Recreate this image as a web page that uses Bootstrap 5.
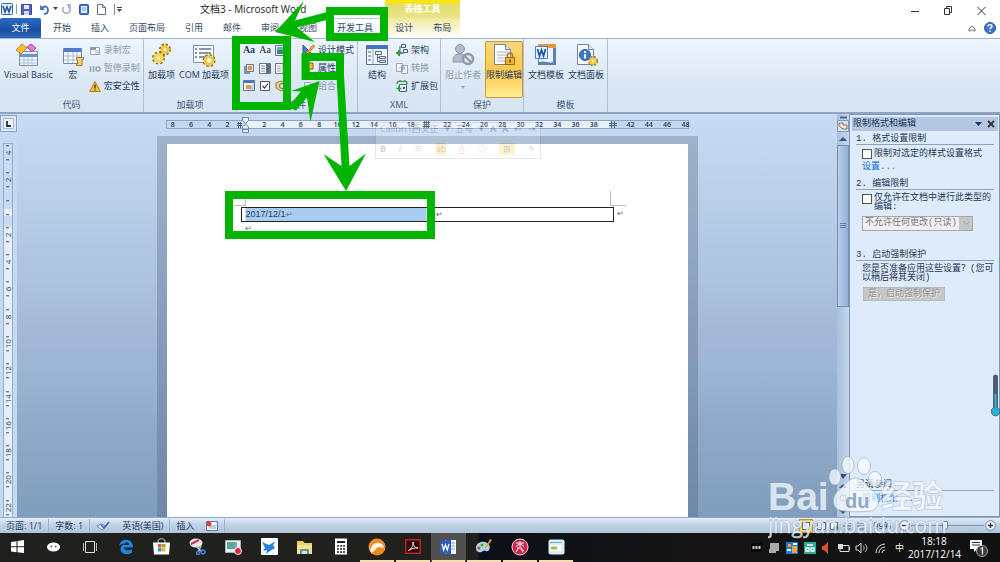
<!DOCTYPE html>
<html lang="zh-CN">
<head>
<meta charset="utf-8">
<meta name="viewport" content="width=device-width, initial-scale=1">
<title>文档3 - Microsoft Word</title>
<link rel="stylesheet" href="https://cdn.jsdelivr.net/npm/bootstrap@5.3.0/dist/css/bootstrap.min.css">
<style>
body{font-family:"Open Sans","Noto Sans CJK SC",sans-serif;font-size:9px;line-height:12px;color:#1f3a5f;min-height:100vh;background:#fff;overflow-x:hidden}
button,input,select{font:inherit;color:inherit}
.plain{border:0;background:none;padding:0;display:flex;align-items:center}
a{text-decoration:none}
svg{display:block;flex:none}
/* title bar and tabs */
.titlebar{height:18px}
.qat{width:200px;padding-left:1px}
.doc-title{width:185px;font-size:10px;color:#222}
.ctx-head{width:75px;height:18px;background:linear-gradient(#ffe600 0 2px,#e2dc6a 4px,#e9e588);color:#fff;font-weight:700}
.tabs{height:20px}
.tabs .tab{padding:0 10px;height:20px;line-height:20px;color:#33475f;white-space:nowrap}
.tabs .tab-file{width:41px;padding:0;margin-right:2px;text-align:center;color:#fff;background:linear-gradient(#2a6cc4,#1a4fa0 60%,#2c69c0);border-radius:2px 2px 0 0}
.tabs .tab-on{border:1px solid #b5c6da;border-bottom:0;border-radius:2px 2px 0 0;background:linear-gradient(#fff,#e9f2fc);padding:0 9px;margin-right:2px;line-height:18px}
.ctx-tabs{background:linear-gradient(#eeeaa0,#fff);width:75px}
/* ribbon */
.ribbon{height:76px;background:linear-gradient(#edf5fd,#dce8f5 55%,#d7e4f1);border-top:1px solid #9fb4d0;border-bottom:2px solid #8fa4bf}
.rgroup{display:flex;flex-direction:column;border-right:1px solid #afc0d6;flex:none}
.rgroup>.rbody{height:59px;display:flex;padding-top:2px}
.rgroup>.rname{line-height:14px;text-align:center;color:#41597a}
.big{flex-direction:column;height:57px;padding-top:2px;white-space:nowrap}
.big span{margin-top:2px;line-height:12px}
.big svg{height:24px}
.smalls{display:flex;flex-direction:column}
.smalls .plain{height:18px;gap:3px;white-space:nowrap}
.off{color:#8d9bae}
.pressed{border:1px solid #c99a36;border-radius:2px;background:linear-gradient(#fbd77a,#fdc94f 50%,#ffd768 75%,#fff19a);padding-top:1px}
.g-code{width:144px}.g-addin{width:93px}.g-ctl{width:121px}.g-xml{width:83px}.g-prot{width:83px}.g-tpl{width:84px}
.ctl-grid{display:grid;grid-template-columns:repeat(3,16px);grid-auto-rows:18px;place-items:center}
.ctl-grid .aa{font:bold 10px/12px "Liberation Serif","Noto Sans CJK SC",serif}
/* work area */
.work{background:linear-gradient(#c8dbf2,#b0c6e0 36%,#a2b6d5 58%,#9bb7d3 62%,#93abcb 75%,#7f9dbc)}
.vcol{width:17px;background:#c5d9f0}
.tabsel{width:17px;height:17px;border:1px solid #8aa3c4;background:#dce8f6;margin:1px 0 11px;display:grid;place-items:center}
.vruler{width:10px;margin-left:3px;border:1px solid #93add0;border-bottom:0;overflow:hidden;background:linear-gradient(#c9dbf1 0 65px,#e6effa 65px 72px,#c9dbf1 72px 83px,#e6effa 83px)}
.vruler>div{margin:-5px 0 -4px}
.vruler span{flex:1 1 0;min-height:0;display:grid;place-items:center;font-size:8px;line-height:8px;writing-mode:vertical-rl;transform:rotate(180deg);background:linear-gradient(#456 0 0) center 6px/3px 1px no-repeat,linear-gradient(#456 0 0) center 20px/3px 1px no-repeat}
.hruler{width:523px;height:9px;margin-top:6px;border:1px solid #8ba6c9;font-size:7px;font-weight:600;line-height:8px;background:linear-gradient(90deg,#c4d7ee 0 80px,#e8f1fb 80px 443px,#c4d7ee 443px)}
.hruler .nums{margin:0 -7px 0 -3px}
.hruler span{flex:1 1 0;text-align:center}
.hmarks{left:69px;top:-4px}
.sheet-wrap{width:541px;margin-top:7px;padding:8px 10px 0;background:rgba(70,90,120,.3)}
.sheet{background:#fff;padding:63px 73px 0 74px}
.doc-tbl{width:373px;table-layout:fixed;border-collapse:collapse;font:9px/13px "Liberation Sans","Noto Sans CJK SC",sans-serif;color:#1c3f66}
.doc-tbl td{border:1px solid #222;height:14px;padding:0 0 0 4px}
.doc-tbl td.sel{width:186px;background:linear-gradient(90deg,#fff 4px,#a9ccf1 4px)}
.crn{border:0 solid #bbb;width:12px;height:15px;top:-16px}
.crn-l{left:-7px;border-width:0 1px 1px 0}
.crn-r{right:-11px;border-width:0 0 1px 1px;width:16px}
.ret{font-size:8px;color:#667}
.mini{left:358px;top:8px;width:166px;height:37px;border:1px solid #888;background:#fff;opacity:.2;font-size:9px;color:#222;white-space:nowrap;overflow:hidden}
.sbar{width:12px;background:linear-gradient(90deg,#a9c0dd,#c4d6ec)}
.sbar .thumb{width:12px;height:162px;border:1px solid #6f8fb6;background:linear-gradient(90deg,#b9cfe8,#93b2d6);display:grid;place-items:center;color:#587ba5}
/* task pane */
.pane{width:151px;background:#deebfb;border:1px solid #7d97ba;font-family:"Liberation Mono","Noto Sans CJK SC",sans-serif;color:#1f3655;padding:2px 1px 0 2px;line-height:9px}
.pane-head{background:#b3c7e2;height:14px;line-height:14px;padding:0 3px 0 1px}
.pane h2{font-size:9px;line-height:9px;margin:0 4px;border-bottom:1px solid #8fa3bf;white-space:pre;font-weight:400}
.pane .blk{padding:0 0 0 10px}
.pane a{color:#0a6fd8}
.pane input[type=checkbox]{appearance:none;width:10px;height:10px;border:1px solid #555;background:#fff;margin:0 2px 0 0;flex:none}
.pickbox{width:111px}
.pickbox svg{right:3px;top:5px}
.pane select{appearance:none;display:block;width:100%;height:15px;border:1px solid #a7a7a7;border-radius:0;padding:0 2px;color:#777;background:linear-gradient(#c6c6c6 0 0) right/13px 100% no-repeat #f0f0f0;line-height:13px;opacity:1}
.pane .start{width:82px;height:14px;border:1px solid #b9b9b9;background:#c6c6c6;color:#8e8e8e;text-shadow:1px 1px #eee;padding:0;margin-left:1px;line-height:12px}
/* status bar */
.status{height:16px;background:linear-gradient(#e3edf8,#c3d4e7 40%,#b0c3d9);border-top:1px solid #93aac6;color:#2a4160;line-height:14px}
.status .seg{border-right:1px solid #9bb0ca;padding:0 6px;height:13px}
.zoomer{appearance:none;width:73px;height:11px;background:linear-gradient(#7f93ab 0 0) center/100% 1px no-repeat;margin:0 1px}
.zoomer::-webkit-slider-thumb{appearance:none;width:6px;height:9px;border:1px solid #687f9c;background:#f5f8fc;border-radius:1px 1px 3px 3px}
/* windows taskbar */
.taskbar{height:29px;background:linear-gradient(90deg,#20201f 0 477px,#0b1017 480px,#171515 700px,#111)}
.apps{width:574px}
.apps .plain{flex:1 1 0;justify-content:center;border-bottom:2px solid transparent}
.apps .run{border-image:linear-gradient(90deg,transparent 3px,#f7dcae 3px calc(100% - 3px),transparent 0) 2}
.apps .front{background:#505050}
.tray{color:#eee;gap:4px}
.clock{width:52px;text-align:center;font-size:10px;line-height:13px;color:#fff;white-space:nowrap}
.over{pointer-events:none}
.floatbar{right:0;top:374px}
.wm{right:52px;bottom:18px}
</style>
</head>
<body class="d-flex flex-column position-relative">

<header>
  <div class="titlebar d-flex align-items-center">
    <div class="qat d-flex align-items-center">
      <svg width="12" height="12" viewBox="0 0 12 12"><rect x=".5" y=".5" width="11" height="11" rx="1" fill="#eaf3fd" stroke="#2b62ad"/><path d="M2 3l2 6 2-5 2 5 2-6" fill="none" stroke="#1d57a8" stroke-width="1.6"/></svg>
      <svg width="8" height="12"><path d="M3.500 1v10" stroke="#999"/></svg>
      <button class="plain" aria-label="保存"><svg width="11" height="11" viewBox="0 0 11 11"><path d="M.5.500h10v10h-10z" fill="#5163bd" stroke="#38489a"/><path d="M3 1h5v4H3z" fill="#e7ecfb"/><path d="M3 7h5v4H3z" fill="#cfd8f4"/></svg></button>
      <button class="plain ms-2" aria-label="撤消"><svg width="9" height="11" viewBox="0 0 9 11"><path d="M2 4c3-3 6-1 6 2S6 10 4 10" fill="none" stroke="#3e6fc2" stroke-width="1.800"/><path d="M0 1v5h5z" fill="#3e6fc2"/></svg></button>
      <svg class="ms-1" width="5" height="4"><path d="M0 0h5L2.500 3z" fill="#444"/></svg>
      <button class="plain ms-1" aria-label="恢复"><svg width="9" height="11" viewBox="0 0 9 11"><path d="M6 2.500A3.600 3.600 0 1 1 2 3" fill="none" stroke="#a9b7ca" stroke-width="1.800"/><path d="M4 0h5v5z" fill="#a9b7ca"/></svg></button>
      <button class="plain ms-2" aria-label="打印预览"><svg width="10" height="11" viewBox="0 0 10 11"><rect x=".5" y=".5" width="9" height="10" rx="1" fill="#3d74d0" stroke="#2759ac"/><path d="M2 2h6v7H2z" fill="#dfeafc"/><path d="M3 4h4M3 6h4" stroke="#7fa3dc"/></svg></button>
      <button class="plain ms-2" aria-label="新建"><svg width="9" height="11" viewBox="0 0 9 11"><path d="M.5.500h5l3 3v7h-8z" fill="#fff" stroke="#5f7290"/><path d="M5.500.500v3h3" fill="none" stroke="#5f7290"/></svg></button>
      <svg class="ms-2" width="9" height="11"><path d="M.5 0v11" stroke="#888"/><path d="M3 3.500h5" stroke="#444"/><path d="M3 5h5L5.500 8z" fill="#444"/></svg>
    </div>
    <div class="doc-title">文档3 - Microsoft Word</div>
    <div class="ctx-head d-flex align-items-center justify-content-center">表格工具</div>
    <div class="d-flex ms-auto align-items-center pt-1">
      <button class="plain" aria-label="最小化"><svg width="33" height="10"><path d="M11 5.500h8" stroke="#333"/></svg></button>
      <button class="plain" aria-label="还原"><svg width="33" height="10"><path d="M11.500 2.500h5v6h-5zM13.500 2.500v-2h5v6h-2" fill="none" stroke="#333"/></svg></button>
      <button class="plain" aria-label="关闭"><svg width="34" height="10"><path d="M11.500 1l8 8m0-8l-8 8" stroke="#333"/></svg></button>
    </div>
  </div>
  <div class="d-flex tabs">
    <nav class="d-flex">
      <a class="tab tab-file" href="#">文件</a><a class="tab" href="#">开始</a><a class="tab" href="#">插入</a><a class="tab" href="#">页面布局</a><a class="tab" href="#">引用</a><a class="tab" href="#">邮件</a><a class="tab" href="#">审阅</a><a class="tab" href="#">视图</a><a class="tab tab-on" href="#">开发工具</a>
      <div class="ctx-tabs d-flex"><a class="tab" href="#">设计</a><a class="tab" href="#">布局</a></div>
    </nav>
    <div class="d-flex ms-auto align-items-center pe-1">
      <button class="plain me-1" aria-label="功能区最小化"><svg width="8" height="7"><path d="M1 4l3-3 3 3v2H5.500L4 4.500 2.500 6H1z" fill="none" stroke="#667"/></svg></button>
      <button class="plain ms-1" aria-label="帮助"><svg width="12" height="12" viewBox="0 0 12 12"><circle cx="6" cy="6" r="5.500" fill="#3f74cc" stroke="#2b58a4"/><path d="M4 4.500C4 2 8 2 8 4.300 8 5.700 6 5.600 6 7.300" fill="none" stroke="#fff" stroke-width="1.400"/><circle cx="6" cy="9.200" r=".8" fill="#fff"/></svg></button>
    </div>
  </div>
</header>

<section class="ribbon d-flex" aria-label="开发工具">
  <div class="rgroup g-code">
    <div class="rbody">
      <button class="plain big ms-1"><svg width="26" viewBox="0 0 26 24"><path d="M4.500 8.500h18v14h-18z" fill="#f3f8fe" stroke="#7d93b3"/><path d="M5 11h17v3H5z" fill="#6d93cf"/><path d="M9 14v8m4-8v8m4-8v8M5 17h17M5 20h17" stroke="#a9bedc"/><path d="M1 7l6-6 5 4-6 6z" fill="#f8bf3c" stroke="#bf8516"/><path d="M12 4l4-3 5 4-4 4z" fill="#e577d8" stroke="#af43a3"/></svg><span>Visual Basic</span></button>
      <button class="plain big ms-2"><svg width="24" viewBox="0 0 24 24"><path d="M2.500 5.500h18v15h-18z" fill="#f3f8fe" stroke="#7288aa"/><path d="M3 5h17v4H3z" fill="#4f7cc4"/><path d="M7 9v11m5-11v11m4-11v11M3 13h17M3 17h17" stroke="#a9bedc"/><path d="M15.500 14.500h7v2h-1.500v6h-5.500v-2H17z" fill="#f5cf75" stroke="#a8761c"/></svg><span>宏</span></button>
      <div class="smalls ms-1">
        <button class="plain off"><svg width="12" height="11" viewBox="0 0 12 11"><path d="M1.500 2.500h9v7h-9z" fill="#f4f6f8" stroke="#9aa5b3"/><path d="M2 2h5v3H2z" fill="#8d98a7"/><path d="M6 6h4M6 8h4" stroke="#a9b3c0"/></svg>录制宏</button>
        <button class="plain off"><svg width="12" height="11" viewBox="0 0 12 11"><path d="M1.500 3v6M4.500 3v6" stroke="#9aa5b3" stroke-width="1.500"/><circle cx="9" cy="6" r="2" fill="none" stroke="#9aa5b3" stroke-width="1.600"/></svg>暂停录制</button>
        <button class="plain"><svg width="12" height="11" viewBox="0 0 12 11"><path d="M6 .6l5.400 9.900H.6z" fill="#fbc62c" stroke="#b07f10"/><path d="M6 3.500v4M6 8.500v1" stroke="#222" stroke-width="1.200"/></svg>宏安全性</button>
      </div>
    </div>
    <div class="rname">代码</div>
  </div>

  <div class="rgroup g-addin">
    <div class="rbody ps-1">
      <button class="plain big"><svg width="20" viewBox="0 0 20 24"><g fill="none" stroke="#8e6b10" stroke-width="4"><circle cx="13" cy="6.500" r="4" stroke-dasharray="1.800 1.350"/><circle cx="6.500" cy="15" r="4.500" stroke-dasharray="2 1.530"/></g><circle cx="13" cy="6.500" r="3" fill="none" stroke="#f2c63d" stroke-width="3"/><circle cx="6.500" cy="15" r="3.500" fill="none" stroke="#f7d257" stroke-width="3.300"/></svg><span>加载项</span></button>
      <button class="plain big ms-1"><svg width="24" viewBox="0 0 24 24"><path d="M1.500 2.500h20v17h-20z" fill="#f7fafe" stroke="#7e8fa8"/><path d="M3 6h2m2 0h12M3 10h2m2 0h12M3 14h2m2 0h8" stroke="#62758f" stroke-width="1.300"/><circle cx="17" cy="17.500" r="5" fill="none" stroke="#8e6b10" stroke-width="3" stroke-dasharray="2.200 1.700"/><circle cx="17" cy="17.500" r="3.800" fill="#fff" stroke="#f2c63d" stroke-width="3"/></svg><span>COM 加载项</span></button>
    </div>
    <div class="rname">加载项</div>
  </div>

  <div class="rgroup g-ctl">
    <div class="rbody">
      <div class="ctl-grid ms-1">
        <button class="plain aa">Aa</button><button class="plain aa text-dark fw-normal">Aa</button>
        <button class="plain" aria-label="图片"><svg width="12" height="11"><path d="M.5.500h11v10H.5z" fill="#eef" stroke="#678"/><path d="M2 2h8v3H2z" fill="#5bb0cf"/><path d="M2 5h8v4H2z" fill="#3c8f5a"/></svg></button>
        <button class="plain" aria-label="构建基块"><svg width="12" height="11"><path d="M3.500 1.500h7v7h-7z" fill="#dfe8f5" stroke="#64789a"/><path d="M5 3h4v4H5z" fill="#f0903c"/><path d="M2 3v7h5" fill="none" stroke="#64789a" stroke-width="1.500"/></svg></button>
        <button class="plain" aria-label="组合框"><svg width="12" height="11"><path d="M.5.500h11v10H.5z" fill="#fff" stroke="#678"/><path d="M7 1h4v9H7z" fill="#5d6e86"/><path d="M2 3h4M2 5.500h4M2 8h4" stroke="#789"/></svg></button>
        <button class="plain" aria-label="下拉列表"><svg width="12" height="11"><path d="M.5.500h11v10H.5z" fill="#fff" stroke="#678"/><path d="M2 3h4M2 5.500h4M2 8h4" stroke="#99a"/><path d="M7 1h4v9H7z" fill="#b8c5d8"/></svg></button>
        <button class="plain" aria-label="日期选取器"><svg width="12" height="12"><path d="M.5.500h11v10H.5z" fill="#f4f8ff" stroke="#5a78a8"/><path d="M1 1h10v2H1z" fill="#4477c4"/><path d="M3 5h5v4H3z" fill="#f39a38"/><path d="M8 6v5M10 4v6" stroke="#8aa3c8"/></svg></button>
        <button class="plain" aria-label="复选框"><svg width="10" height="10"><path d="M.5.500h9v9h-9z" fill="#fff" stroke="#555"/><path d="M2.500 5l2 2L8 2.500" fill="none" stroke="#335" stroke-width="1.200"/></svg></button>
        <button class="plain" aria-label="旧式工具"><svg width="12" height="12"><path d="M1 3l5-2 5 3v5l-5 2-5-3z" fill="#f0d178" stroke="#9a7d2c"/><circle cx="7" cy="6" r="2.500" fill="#dbe3f0" stroke="#667"/></svg></button>
      </div>
      <div class="border-end my-1 ms-2"></div>
      <div class="smalls ms-1">
        <button class="plain"><svg width="13" height="12"><path d="M1 1v9h9z" fill="#5478bd" stroke="#35558f"/><path d="M4 9l7-8 2 1-7 8z" fill="#f1a53a" stroke="#a8641c" stroke-width=".6"/></svg>设计模式</button>
        <button class="plain"><svg width="13" height="12"><path d="M5 1h6v6H8l-2 4-1-4z" fill="#f2bd3c" stroke="#8d6515"/><path d="M2 9h5" stroke="#567"/></svg>属性</button>
        <button class="plain off"><svg width="13" height="12"><path d="M2.500 2.500h6v5h-6zM6.500 5.500h5v5h-5z" fill="#eef1f5" stroke="#9aa5b3"/></svg>组合</button>
      </div>
    </div>
    <div class="rname">控件</div>
  </div>

  <div class="rgroup g-xml">
    <div class="rbody">
      <button class="plain big ms-2"><svg width="22" viewBox="0 0 22 24"><path d="M.5 2.500h21v19H.500z" fill="#eff5fd" stroke="#5c7192"/><path d="M1 3h20v3H1z" fill="#3f74cb"/><path d="M7 6v15" stroke="#8ea3c2"/><path d="M2 9h3m-3 4h3m-3 4h3" stroke="#52688b"/><path d="M9.500 8.500h6v3h-6zM13.500 13.500h6v2h-6zM13.500 17.500h6v2h-6zM11.500 12v6.500h2m-2-4h2" fill="#fff" stroke="#52688b"/></svg><span>结构</span></button>
      <div class="smalls ms-2">
        <button class="plain"><svg width="12" height="12"><path d="M5.500.500h4v3h-4zM7.500 5.500h4v3h-4zM4 2v7h4" fill="#e7effb" stroke="#3e5d8d"/><path d="M3 6v6M0 9h6" stroke="#2d9c38" stroke-width="2"/></svg>架构</button>
        <button class="plain off"><svg width="12" height="12"><path d="M.5 1.500h6v8h-6zM5.500 3.500h6v8h-6z" fill="#f6f7f9" stroke="#9aa5b3"/><path d="M3 6h6M7 4l2 2-2 2" stroke="#9aa5b3" fill="none"/></svg>转换</button>
        <button class="plain"><svg width="12" height="12"><path d="M3.500 4.500h7v7h-7z" fill="#e9eff8" stroke="#4c6285"/><path d="M1 4c0-3 4-4 5-2M11 4C11 1 8 0 7 2" stroke="#2e8c3a" fill="none" stroke-width="1.500"/><path d="M3 6v5M.500 8.500h5" stroke="#2d9c38" stroke-width="1.600"/><path d="M7 7h2v2H7z" fill="#456"/></svg>扩展包</button>
      </div>
    </div>
    <div class="rname">XML</div>
  </div>

  <div class="rgroup g-prot">
    <div class="rbody">
      <button class="plain big off ms-1" disabled><svg width="24" viewBox="0 0 24 24"><circle cx="9" cy="6" r="4.500" fill="#b3bdca" stroke="#8b97a8"/><path d="M2 19c0-7 3-8 7-8s6 2 6 8z" fill="#b3bdca" stroke="#8b97a8"/><circle cx="17" cy="16" r="5" fill="#e3eaf3" stroke="#8f9bad" stroke-width="2.500"/><path d="M13.500 13l7 6.500" stroke="#8f9bad" stroke-width="2.200"/></svg><span>阻止作者</span><svg class="mt-1" style="height:5px" width="5" height="5"><path d="M0 1h4L2 4z" fill="#9aa5b3"/></svg></button>
      <button class="plain big pressed ms-1"><svg width="24" viewBox="0 0 24 24"><path d="M2.500 1.500h11l5 5v15h-16z" fill="#fbfcfe" stroke="#76849a"/><path d="M13.500 1.500v5h5" fill="#dfe6f0" stroke="#76849a"/><path d="M5 9h11M5 12h11M5 15h9M5 18h8" stroke="#a7b3c4"/><path d="M15.500 14.500v-2c0-3.500 5-3.500 5 0v2" fill="none" stroke="#a57a26" stroke-width="1.500"/><path d="M13.500 14.500h9v7h-9z" fill="#f0b23c" stroke="#96691a"/><path d="M18 16.500v3" stroke="#5b3d0b" stroke-width="1.500"/></svg><span>限制编辑</span></button>
    </div>
    <div class="rname">保护</div>
  </div>

  <div class="rgroup g-tpl">
    <div class="rbody">
      <button class="plain big ms-1"><svg width="24" viewBox="0 0 24 24"><path d="M4 1h18v21H4z" fill="#5e7fb0"/><path d="M4 1h18v4H4z" fill="#e8963c"/><path d="M5 5h14v14c-4 2-8-2-14 0z" fill="#eaf1fb"/><path d="M1.500 3.500h12v12h-12z" fill="#e6f1fd" stroke="#4383d0"/><path d="M3.500 6l2 7 2-6 2 6 2-7" fill="none" stroke="#1b57ad" stroke-width="1.700"/></svg><span>文档模板</span></button>
      <button class="plain big ms-1"><svg width="24" viewBox="0 0 24 24"><path d="M3.500 1.500h11l5 5v15h-16z" fill="#fbfcfe" stroke="#76849a"/><path d="M14.500 1.500v5h5" fill="#dfe6f0" stroke="#76849a"/><circle cx="11" cy="12" r="5.500" fill="#3e78cf" stroke="#2a5caa"/><path d="M11 11v4.500M11 8v2" stroke="#fff" stroke-width="2"/><circle cx="19" cy="18" r="3.500" fill="none" stroke="#8e6b10" stroke-width="3" stroke-dasharray="1.600 1.200"/><circle cx="19" cy="18" r="2.600" fill="#fff" stroke="#f2c63d" stroke-width="2.500"/></svg><span>文档面板</span></button>
    </div>
    <div class="rname">模板</div>
  </div>
</section>

<main class="work d-flex flex-grow-1 position-relative">
  <div class="vcol d-flex flex-column">
    <button class="tabsel p-0" aria-label="制表符"><svg width="11" height="11"><path d="M.5.500h10v10H.5z" fill="#f3f8fe" stroke="#a3b7d2"/><path d="M4 3v5h4" fill="none" stroke="#234" stroke-width="1.800"/></svg></button>
    <div class="vruler d-flex flex-column flex-grow-1"><div class="d-flex flex-column flex-grow-1"><span>4</span><span>2</span><span></span><span>2</span><span>4</span><span>6</span><span>8</span><span>10</span><span>12</span><span>14</span><span>16</span><span>18</span><span>20</span><span>22</span></div></div>
  </div>

  <div class="d-flex flex-column align-items-center flex-grow-1 position-relative">
    <div class="hruler position-relative">
      <div class="nums d-flex"><span>8</span><span>6</span><span>4</span><span>2</span><span></span><span>2</span><span>4</span><span>6</span><span>8</span><span>10</span><span>12</span><span>14</span><span>16</span><span>18</span><span></span><span>22</span><span>24</span><span>26</span><span>28</span><span>30</span><span>32</span><span>34</span><span>36</span><span>38</span><span></span><span>42</span><span>44</span><span>46</span><span>48</span></div>
      <svg class="hmarks position-absolute" width="390" height="17"><g fill="#e9f1fb" stroke="#6f86a6"><path d="M6.500.500h6v3l-3 3-3-3zM6.500 12v-2l3-3 3 3v2zM6.500 12.500h6v3h-6z"/></g><g stroke="#47648d"><path d="M1 6.500h5M1 8.500h5M2.500 5v6M4.500 5v6M187 5.500h7M187 7.500h7M187 9.500h7M188.500 4v7M190.500 4v7M192.500 4v7M373 6.500h8M373 8.500h8M375.500 4v7M378.500 4v7"/></g></svg>
    </div>
    <div class="sheet-wrap d-flex flex-column flex-grow-1">
      <div class="sheet flex-grow-1">
        <div class="position-relative">
          <i class="crn crn-l position-absolute"></i><i class="crn crn-r position-absolute"></i>
          <table class="doc-tbl"><tr><td class="sel">2017/12/1<span class="ret">↵</span></td><td class="ret ps-2">↵</td></tr></table>
          <span class="ret position-absolute top-0 start-100">&nbsp;↵</span>
        </div>
        <div class="ret ps-1">↵</div>
      </div>
    </div>
    <div class="mini position-absolute over">
      <div class="d-flex justify-content-between px-1"><span>Calibri (西文正</span><span>▾</span><span>五号</span><span>▾</span><b>A</b><b>A</b><span>⇤</span><span>⇥</span></div>
      <div class="d-flex justify-content-between px-1 pt-2"><b>B</b><i>I</i><span>≡</span><span class="text-bg-warning">ab</span><u class="text-danger">A</u><span>◇</span><span class="text-bg-warning px-1">⊞</span><span>✎</span></div>
    </div>
  </div>

  <div class="sbar d-flex flex-column align-items-center">
    <svg width="12" height="31"><path d="M3 3.500h7" stroke="#456c9c" stroke-width="2"/><path d="M.5 6.500h11v11H.5z" fill="#d7e3f2" stroke="#8099ba"/><path d="M2 9h4v2h4v4H6l-4-3z" fill="#f2e3d8" stroke="#86746c"/><path d="M6 23l4 4H2z" fill="#3a5478"/></svg>
    <div class="thumb"><svg width="6" height="6"><path d="M0 .500h6M0 2.500h6M0 4.500h6" stroke="#587ba5"/></svg></div>
    <svg class="mt-auto" width="12" height="51"><g fill="#3a5478"><path d="M2 8h8l-4 5zM6 18l4 4H2zM2 44h8l-4 4z"/><circle cx="6" cy="32" r="3" fill="none" stroke="#3a5478"/></g></svg>
  </div>

  <aside class="pane d-flex flex-column">
    <div class="pane-head d-flex align-items-center">限制格式和编辑
      <button class="plain ms-auto" aria-label="菜单"><svg width="8" height="6"><path d="M0 1h7L3.500 5z" fill="#1f3655"/></svg></button>
      <button class="plain ms-1" aria-label="关闭"><svg width="8" height="8"><path d="M1 1l6 6m0-6L1 7" stroke="#333" stroke-width="1.800"/></svg></button>
    </div>
    <h2 class="mt-1">1. 格式设置限制</h2>
    <div class="blk pt-1">
      <label class="d-flex align-items-center"><input type="checkbox">限制对选定的样式设置格式</label>
      <a class="d-block pt-1" href="#">设置...</a>
    </div>
    <h2 class="mt-2">2. 编辑限制</h2>
    <div class="blk pt-1">
      <label class="d-flex"><input type="checkbox"><span>仅允许在文档中进行此类型的编辑:</span></label>
      <div class="pickbox position-relative mt-1"><select disabled aria-label="编辑限制"><option>不允许任何更改(只读)</option></select><svg class="over position-absolute" width="7" height="5"><path d="M.5.500l3 3 3-3" fill="none" stroke="#999"/></svg></div>
    </div>
    <h2 class="mt-3 pt-1">3. 启动强制保护</h2>
    <div class="blk pt-1">
      <div>您是否准备应用这些设置？(您可以稍后将其关闭)</div>
      <button class="start mt-1" disabled>是，启动强制保护</button>
    </div>
    <h2 class="mt-auto">另请参阅</h2>
    <div class="blk pt-1 pb-2"><a href="#" class="d-block mb-1">限制权限...</a></div>
  </aside>
</main>

<footer class="status d-flex align-items-center">
  <span class="seg">页面: 1/1</span><span class="seg">字数: 1</span>
  <span class="seg d-flex align-items-center"><svg class="me-2" width="14" height="12"><path d="M1 6l4-2 5 2-4 4z" fill="#f3f7fc" stroke="#6680a5"/><path d="M5 5l3 3 5-6" fill="none" stroke="#3a63bd" stroke-width="1.700"/></svg><span class="ms-1">英语(美国)</span></span>
  <span class="seg d-flex align-items-center">插入<svg class="ms-2" width="16" height="12"><path d="M4.500 1.500h11v9h-11z" fill="#f4f8ff" stroke="#5a78a8"/><path d="M7 6h7M7 8h7" stroke="#8aa3c8"/><circle cx="7" cy="4" r="2.500" fill="#d9452c"/></svg></span>
  <div class="d-flex align-items-center ms-auto pe-1">
    <svg class="me-1" width="70" height="14"><path d="M.5.500h13v13H.5z" fill="#fbd163" stroke="#c4932e"/><g fill="#f4f8ff" stroke="#586e8e"><path d="M3.500 3.500h7v7h-7zM18.500 3.500h4v7h-4zM22.500 3.500h4v7h-4zM31.500 3.500h7v7h-7zM46 4h6M44 7h8M46 10h6M58 4h7M58 7h7M58 10h7"/></g><circle cx="37" cy="9" r="2.500" fill="#3b8c63"/></svg>
    <span class="me-2">99%</span>
    <button class="plain" aria-label="缩小"><svg width="11" height="11"><circle cx="5.500" cy="5.500" r="4.800" fill="#f5f8fc" stroke="#6f84a0"/><path d="M3 5.500h5" stroke="#334" stroke-width="1.400"/></svg></button>
    <input class="zoomer" type="range" min="0" max="100" value="46" aria-label="缩放">
    <button class="plain" aria-label="放大"><svg width="11" height="11"><circle cx="5.500" cy="5.500" r="4.800" fill="#f5f8fc" stroke="#6f84a0"/><path d="M3 5.500h5M5.500 3v5" stroke="#334" stroke-width="1.400"/></svg></button>
  </div>
</footer>

<div class="taskbar d-flex">
  <div class="apps d-flex">
    <button class="plain" aria-label="开始"><svg width="13" height="13"><path d="M0 2l5.500-.8v5H0zM6.500 1L13 0v6.200H6.500zM0 7.200h5.500v5L0 11.400zM6.500 7.200H13V13l-6.500-.8z" fill="#fff"/></svg></button>
    <button class="plain" aria-label="小娜"><svg width="13" height="10"><ellipse cx="6.500" cy="5" rx="6.500" ry="4.600" fill="#fff"/><path d="M3.500 4.500h1.500M8 4.500h1.500" stroke="#444" stroke-width="1.500"/></svg></button>
    <button class="plain" aria-label="任务视图"><svg width="16" height="12"><path d="M3.500.500h9v11h-9z" fill="none" stroke="#ddd"/><path d="M1.500 2v8M14.500 2v8" stroke="#bbb"/></svg></button>
    <button class="plain" aria-label="Edge"><svg width="16" height="16" viewBox="0 0 16 16"><path d="M1 7C2 2 6 .500 9 .800c4 .300 6 3.500 6 7.700H6c.300 3 4.500 3.700 8 1.700v3.500C8 17 2 14.500 2.500 9.500 3 6.500 5.500 5.500 7 4.500 4.500 4.500 2.500 5.200 1 7zm5-1h5C11 2.500 6.500 3 6 6z" fill="#1b86de"/></svg></button>
    <button class="plain" aria-label="应用商店"><svg width="17" height="17"><path d="M5 5V3c0-3 7-3 7 0v2" fill="none" stroke="#ccc"/><path d="M0 4.500h17l-1 12H1z" fill="#fff"/><path d="M5 6h3.500v3.500H5z" fill="#e8532c"/><path d="M9 6h3.500v3.500H9z" fill="#7fb933"/><path d="M5 10h3.500v3.500H5z" fill="#2a9be0"/><path d="M9 10h3.500v3.500H9z" fill="#f8b921"/></svg></button>
    <button class="plain" aria-label="截图工具"><svg width="17" height="17"><ellipse cx="7" cy="5" rx="6.500" ry="4.500" fill="#e9e9ec"/><path d="M2 6l8-4" stroke="#cf3340" stroke-width="2"/><path d="M7 8l6 6m-1-6l-3 6" stroke="#ccc" stroke-width="1.500"/><circle cx="14" cy="14" r="2" fill="none" stroke="#3b82d0" stroke-width="1.500"/><circle cx="9" cy="15" r="1.500" fill="none" stroke="#3b82d0" stroke-width="1.500"/></svg></button>
    <button class="plain" aria-label="录屏"><svg width="17" height="16"><path d="M.5 1.500h15v12H.5z" fill="#e9eeee" stroke="#a9b4b4"/><path d="M2 3h8v7H2z" fill="#59a79b"/><path d="M11 3v9" stroke="#9ab" stroke-width="2"/><circle cx="13" cy="12" r="3.500" fill="#d8293c" stroke="#fff"/></svg></button>
    <button class="plain" aria-label="迅雷"><svg width="17" height="17"><rect width="17" height="17" rx="1" fill="#fff"/><path d="M1 4l7 3 7-4-3 4 2 3-5 3-4 3 1-4-4 1 2-3z" fill="#2b7fe0"/></svg></button>
    <button class="plain" aria-label="文件资源管理器"><svg width="17" height="14"><path d="M1 1h6l1.500 2H16v11H1z" fill="#f6cd5c"/><path d="M1 5h15v9H1z" fill="#fde08a"/><path d="M4 14V9h9v5h-2v-3H6v3z" fill="#3d9bd9"/></svg></button>
    <button class="plain" aria-label="计算器"><svg width="14" height="17"><path d="M1 .500h12v16H1z" fill="#fff"/><path d="M3 3h8v2H3z" fill="#222"/><path d="M3 8h8M3 11h8M3 14h8" stroke="#222" stroke-width="1.600" stroke-dasharray="2 1"/></svg></button>
    <button class="plain run" aria-label="猎豹浏览器"><svg width="18" height="18"><circle cx="9" cy="9" r="8.500" fill="#f08a24"/><path d="M2 12c2-7 8-9 12-6 2 2 2 4 0 4-3-2-5-1-6 1s-4 2-4 5z" fill="#fff3e2"/></svg></button>
    <button class="plain run" aria-label="Adobe Reader"><svg width="16" height="15"><path d="M.8.800h14.400v13.400H.8z" fill="#2c0b0b" stroke="#c81f1f" stroke-width="1.500"/><path d="M3.500 11.500C7 9 8.500 6 8 3c0 4 2.500 6 5 6-4-.5-6 .5-9.500 2.500z" fill="none" stroke="#eee"/></svg></button>
    <button class="plain run front" aria-label="Word"><svg width="17" height="16"><path d="M5 1h11v14H5z" fill="#f5f8fd"/><path d="M11 4h4M11 7h4M11 10h4" stroke="#7da2d8"/><path d="M0 2l11-1.500v15L0 14z" fill="#2c5fb3"/><path d="M2 5l1.700 6L5.500 6l1.800 5L9 5" fill="none" stroke="#fff" stroke-width="1.300"/></svg></button>
    <button class="plain run" aria-label="画图"><svg width="18" height="17"><path d="M1 10c0-5 5-7 9-6s6 5 4 8-4-1-6 1-7 2-7-3z" fill="#a9d5ee"/><circle cx="4" cy="10" r="1.500" fill="#d33"/><circle cx="7" cy="7" r="1.500" fill="#3a3"/><circle cx="11" cy="7" r="1.500" fill="#ec2"/><path d="M8 14l7-13 2 1z" fill="#d99a4c"/></svg></button>
    <button class="plain run" aria-label="秀米"><svg width="18" height="18"><circle cx="9" cy="9" r="8" fill="#d3214b" stroke="#f5d7dc"/><path d="M5 5h8M9 3.500V9M5 8.500l4-3 4 3M6 10h5l-1 2h2.500l-1 2.500M7.500 10L5 14" stroke="#fff" fill="none"/></svg></button>
    <button class="plain run" aria-label="记事"><svg width="17" height="16"><rect x=".5" y=".5" width="16" height="15" rx="2" fill="#d8edf6"/><path d="M2 3.500h12" stroke="#6fb1d3"/><path d="M2 6h11v6H2z" fill="#fff"/><path d="M3 7.500h6v3H3z" fill="#9fc04e"/></svg></button>
  </div>
  <div class="tray d-flex align-items-center ms-auto">
    <svg width="136" height="16"><rect x="0" y="3" width="11" height="9" fill="#080808"/><path d="M1.500 7.500h8" stroke="#ccc" stroke-width="3" stroke-dasharray="2 1"/><path d="M19 3h9v8h-3v2h-7v-4h1z" fill="#aaa"/><path d="M35 2h12v12H35z" fill="#1c78d8"/><path d="M41 6h5v7h-5zM37 4h3v3h-3z" fill="#f5a33a"/><path d="M36 10h4M42 4h4" stroke="#fff" stroke-width="2"/><path d="M53 2h12v12H53z" fill="#27a99b"/><path d="M55 8h3v3h-3zM60 8h3v3h-3zM56 5h6" fill="none" stroke="#fff" stroke-width="1.300"/><path d="M71 6h2l4-4v12l-4-4h-2z" fill="#e0522d"/><path d="M89 5.500h9v6h-9zM98.500 7v3" stroke="#ddd" fill="none"/><path d="M87 4h5v5h-5z" fill="#ddd"/><path d="M105 6h2l3-3v10l-3-3h-2z" fill="none" stroke="#ddd"/><path d="M112 5.500c1.500 1.500 1.500 3.500 0 5M114 4c2.500 2.500 2.500 5.500 0 8" stroke="#bbb" fill="none"/><path d="M125 13a9 9 0 0 1 9-9M128 13a6 6 0 0 1 6-6M131 13a3 3 0 0 1 3-3" stroke="#ddd" fill="none"/></svg>
    <span class="ps-1">中</span>
    <div class="clock">18:18<br>2017/12/14</div>
    <button class="plain ms-1 me-2" aria-label="通知"><svg width="24" height="22"><path d="M2 3h12v9H9l-3 3v-3H2z" fill="#fff"/><path d="M4 5.500h8M4 8h8" stroke="#333"/><circle cx="14" cy="14" r="5.500" fill="#3a3a3a" stroke="#aaa"/><path d="M12.500 12l2-1v6.500" fill="none" stroke="#fff" stroke-width="1.200"/></svg></button>
  </div>
</div>

<svg class="floatbar position-absolute over" width="9" height="43"><path d="M4.500 3v34" stroke="#4b6072" stroke-width="5" stroke-linecap="round"/><circle cx="4.500" cy="37.500" r="4.300" fill="#2cb3dc" stroke="#4b6072"/><path d="M4.500 20v17" stroke="#2cb3dc" stroke-width="2"/></svg>

<!-- step markers drawn over the window -->
<svg class="over position-absolute top-0 start-0" width="450" height="245">
  <g fill="none" stroke="#00b400" stroke-width="8"><path d="M236 40h51v66h-51zM330 11h54v26h-54zM305.500 57h34.500v19h-34.500zM229 195h202v40H229z"/></g>
  <g fill="#00b400"><path d="M275 32l29-31-9 19.500 32-8.500v8l-30 7.500 18 14.500zM291 91l28.500-10-9 41-3.500-24.500-11 13-5-2v-5l10-12zM336.500 76h7.500l5.500 90 16.500-12.500-20 37.500-22.500-37 18 12z"/></g>
</svg>

<svg class="wm over position-absolute" width="180" height="92">
  <g fill="#f8fbfe" fill-opacity=".75" stroke="#8fa5be" stroke-opacity=".6">
    <ellipse cx="67" cy="25" rx="6" ry="8"/><ellipse cx="80" cy="13" rx="6" ry="8.500"/><ellipse cx="96" cy="14" rx="6.500" ry="8.500"/><ellipse cx="107" cy="27" rx="6.500" ry="7.500"/>
    <path d="M88 26c7 0 10 8 17 13 8 6 7 19-3 20-6 1-22 1-28 0-11-2-11-15-3-21 7-5 9-12 17-12z"/>
    <g paint-order="stroke">
      <text x="0" y="58" font-family="Liberation Sans" font-weight="700" font-size="39">Bai</text>
      <text x="113" y="55" font-family="Noto Sans CJK SC" font-weight="700" font-size="31">经验</text>
      <text x="0" y="81" font-family="Open Sans, sans-serif" font-size="21">jingyan.baidu.com</text>
    </g>
  </g>
  <text x="77" y="56" font-family="Liberation Sans" font-weight="700" font-size="20" fill="#8fa8c4">du</text>
</svg>

<script src="https://cdn.jsdelivr.net/npm/bootstrap@5.3.0/dist/js/bootstrap.bundle.min.js"></script>
</body>
</html>
